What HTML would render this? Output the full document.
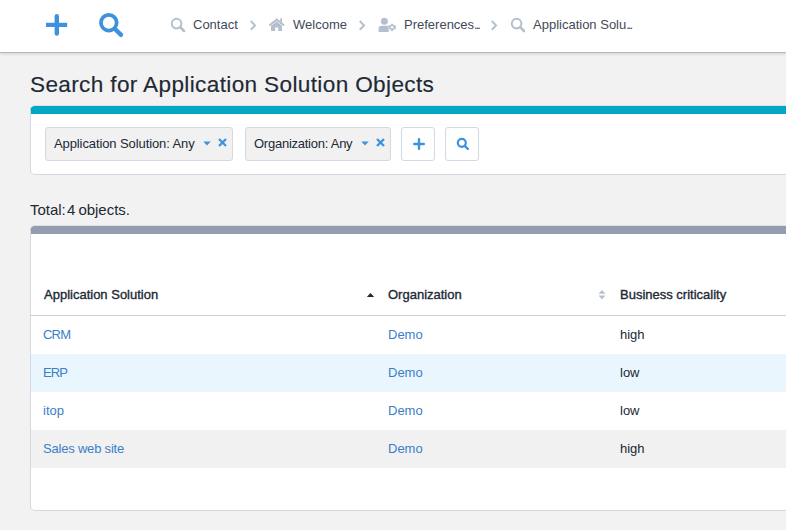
<!DOCTYPE html>
<html><head><meta charset="utf-8">
<style>
*{box-sizing:border-box;margin:0;padding:0}
html,body{width:786px;height:530px;overflow:hidden;background:#f2f2f2;font-family:"Liberation Sans",sans-serif;color:#212934}
.hdr{position:absolute;left:0;top:0;width:786px;height:53px;background:#fff;border-bottom:1px solid #b8b8b8;box-shadow:0 1px 3px rgba(0,0,0,.14)}
.abs{position:absolute}
.bc{position:absolute;top:17px;font-size:13px;color:#3f4a58;white-space:nowrap;line-height:15px}
.dots{letter-spacing:-2px}
.title{position:absolute;left:30px;top:71.5px;font-size:22.6px;color:#212934;white-space:nowrap;line-height:26px;letter-spacing:0.35px;-webkit-text-stroke:0.15px #212934}
.panel{position:absolute;left:30px;width:780px;background:#fff;border:1px solid #d3d9e1;border-radius:5px;box-shadow:0 -1px 0 rgba(150,160,175,.22)}
.pill{position:absolute;top:127px;height:34px;background:#f1f1f1;border:1px solid #d3d9e1;border-radius:3px;font-size:13px;line-height:32px;padding-left:8px;color:#212934;white-space:nowrap}
.btn{position:absolute;top:127px;width:34px;height:34px;background:#fff;border:1px solid #d3d9e1;border-radius:3px}
.total{position:absolute;left:30px;top:201px;font-size:15px;color:#212934;white-space:nowrap;line-height:18px;letter-spacing:-0.02px;word-spacing:-1px}
.th{position:absolute;top:287px;font-size:13px;font-weight:normal;-webkit-text-stroke:0.35px #212934;color:#212934;white-space:nowrap;line-height:15px}
.row{position:absolute;left:31px;width:760px;height:38px}
.td{position:absolute;font-size:13px;white-space:nowrap;line-height:15px}
.lnk{color:#3a80c9}
</style></head><body>
<div class="hdr"></div>
<!-- header icons -->
<svg class="abs" style="left:44px;top:12px" width="26" height="26" viewBox="0 0 26 26">
  <path d="M12.8 4.2V21.6" stroke="#3d92dd" stroke-width="4.4" stroke-linecap="round" fill="none"/>
  <path d="M2 12.9H23.2" stroke="#3d92dd" stroke-width="4.2" fill="none"/>
</svg>
<svg class="abs" style="left:96px;top:10px" width="30" height="30" viewBox="0 0 30 30">
  <circle cx="12.8" cy="12.7" r="7.85" stroke="#3d92dd" stroke-width="3.7" fill="none"/>
  <path d="M19 19L25 24.8" stroke="#3d92dd" stroke-width="4.4" stroke-linecap="round"/>
</svg>

<!-- breadcrumbs -->
<svg class="abs" style="left:170px;top:17px" width="16" height="16" viewBox="0 0 16 16">
  <circle cx="6.6" cy="6.6" r="4.8" stroke="#b5c0cf" stroke-width="2" fill="none"/>
  <path d="M10.2 10.2L14 14" stroke="#b5c0cf" stroke-width="2.6" stroke-linecap="round"/>
</svg>
<div class="bc" style="left:193px">Contact</div>
<svg class="abs" style="left:248px;top:18px" width="10" height="14" viewBox="0 0 10 14"><path d="M2.8 3L7 7.4L2.8 11.8" stroke="#b5c0cf" stroke-width="2" fill="none"/></svg>
<svg class="abs" style="left:264px;top:14px" width="26" height="22" viewBox="0 0 26 22">
  <path d="M5.9 11L12.7 5.6L19.5 11" stroke="#b5c0cf" stroke-width="2" fill="none" stroke-linecap="round"/>
  <rect x="16.2" y="4.2" width="1.8" height="4.5" fill="#b5c0cf"/>
  <path d="M7 11.8L12.7 7.6L18 11.8V17H14.2V13.5H11.2V17H7Z" fill="#b5c0cf"/>
</svg>
<div class="bc" style="left:293px">Welcome</div>
<svg class="abs" style="left:357px;top:18px" width="10" height="14" viewBox="0 0 10 14"><path d="M2.8 3L7 7.4L2.8 11.8" stroke="#b5c0cf" stroke-width="2" fill="none"/></svg>
<svg class="abs" style="left:374px;top:14px" width="26" height="22" viewBox="0 0 26 22">
  <circle cx="10.4" cy="7.3" r="3.5" fill="#b5c0cf"/>
  <path d="M4.6 17.9V14.5C4.6 12.8 5.8 11.8 7.5 11.8H14.8V17.9Z" fill="#b5c0cf"/>
  <g transform="translate(18.1 13.3)">
    <circle r="4" fill="#fff"/>
    <path d="M-0.9 -3.6H0.9L1.1 -2.5L2.1 -1.9L3.1 -2.3L4 -0.8L3.2 0L4 0.8L3.1 2.3L2.1 1.9L1.1 2.5L0.9 3.6H-0.9L-1.1 2.5L-2.1 1.9L-3.1 2.3L-4 0.8L-3.2 0L-4 -0.8L-3.1 -2.3L-2.1 -1.9L-1.1 -2.5Z" fill="#b5c0cf"/>
    <circle r="1.2" fill="#fff"/>
  </g>
</svg>
<div class="bc" style="left:404px">Preferences<span class="dots">...</span></div>
<svg class="abs" style="left:489px;top:18px" width="10" height="14" viewBox="0 0 10 14"><path d="M2.8 3L7 7.4L2.8 11.8" stroke="#b5c0cf" stroke-width="2" fill="none"/></svg>
<svg class="abs" style="left:510px;top:17px" width="16" height="16" viewBox="0 0 16 16">
  <circle cx="6.6" cy="6.6" r="4.8" stroke="#b5c0cf" stroke-width="2" fill="none"/>
  <path d="M10.2 10.2L14 14" stroke="#b5c0cf" stroke-width="2.6" stroke-linecap="round"/>
</svg>
<div class="bc" style="left:533px">Application Solu<span class="dots">...</span></div>

<div class="title">Search for Application Solution Objects</div>

<!-- search panel -->
<div class="panel" style="top:106px;height:69px;border-top:8px solid #02a8c2"></div>
<div class="pill" style="left:45px;width:188px;letter-spacing:-0.1px">Application Solution: Any
  <svg class="abs" style="left:157px;top:13px" width="8" height="5" viewBox="0 0 8 5"><path d="M0.3 0.5H7.7L4 4.5Z" fill="#3d92dd"/></svg>
  <svg class="abs" style="left:171px;top:9px" width="11" height="11" viewBox="0 0 11 11"><path d="M2 2L9 9M9 2L2 9" stroke="#3d92dd" stroke-width="2.3"/></svg>
</div>
<div class="pill" style="left:245px;width:146px;letter-spacing:-0.25px">Organization: Any
  <svg class="abs" style="left:115px;top:13px" width="8" height="5" viewBox="0 0 8 5"><path d="M0.3 0.5H7.7L4 4.5Z" fill="#3d92dd"/></svg>
  <svg class="abs" style="left:129px;top:9px" width="11" height="11" viewBox="0 0 11 11"><path d="M2 2L9 9M9 2L2 9" stroke="#3d92dd" stroke-width="2.3"/></svg>
</div>
<div class="btn" style="left:401px">
  <svg class="abs" style="left:10.5px;top:9.5px" width="12" height="12" viewBox="0 0 12 12"><path d="M6 1.2V10.8M1.2 6H10.8" stroke="#3d92dd" stroke-width="2.4" stroke-linecap="round"/></svg>
</div>
<div class="btn" style="left:445px">
  <svg class="abs" style="left:10px;top:9px" width="14" height="14" viewBox="0 0 14 14"><circle cx="5.8" cy="5.8" r="4" stroke="#3d92dd" stroke-width="2.2" fill="none"/><path d="M8.8 8.8L11.8 11.8" stroke="#3d92dd" stroke-width="2.4" stroke-linecap="round"/></svg>
</div>

<div class="total">Total:<span style="letter-spacing:-2px"> </span>4 objects.</div>

<!-- results panel -->
<div class="panel" style="top:226px;height:285px;border-top:8px solid #929eb0"></div>
<div class="th" style="left:44px">Application Solution</div>
<svg class="abs" style="left:366px;top:292px" width="9" height="6" viewBox="0 0 9 6"><path d="M0.8 5H8.2L4.5 1Z" fill="#212934"/></svg>
<div class="th" style="left:388px">Organization</div>
<svg class="abs" style="left:597px;top:288px" width="10" height="14" viewBox="0 0 10 14"><path d="M1.5 5.8H8.5L5 2Z M1.5 7.6H8.5L5 11.4Z" fill="#b5c0cf"/></svg>
<div class="th" style="left:620px">Business criticality</div>
<div class="abs" style="left:31px;top:315px;width:760px;height:1px;background:#c9d1db"></div>

<div class="row" style="top:316px;background:#fff"></div>
<div class="row" style="top:354px;background:#eaf6fd"></div>
<div class="row" style="top:392px;background:#fff"></div>
<div class="row" style="top:430px;background:#f1f1f1"></div>

<div class="td lnk" style="left:43px;top:327px;letter-spacing:-0.8px">CRM</div>
<div class="td lnk" style="left:388px;top:327px">Demo</div>
<div class="td" style="left:620px;top:327px">high</div>
<div class="td lnk" style="left:43px;top:365px;letter-spacing:-0.9px">ERP</div>
<div class="td lnk" style="left:388px;top:365px">Demo</div>
<div class="td" style="left:620px;top:365px">low</div>
<div class="td lnk" style="left:43px;top:403px">itop</div>
<div class="td lnk" style="left:388px;top:403px">Demo</div>
<div class="td" style="left:620px;top:403px">low</div>
<div class="td lnk" style="left:43px;top:441px;letter-spacing:-0.2px">Sales web site</div>
<div class="td lnk" style="left:388px;top:441px">Demo</div>
<div class="td" style="left:620px;top:441px">high</div>
</body></html>
